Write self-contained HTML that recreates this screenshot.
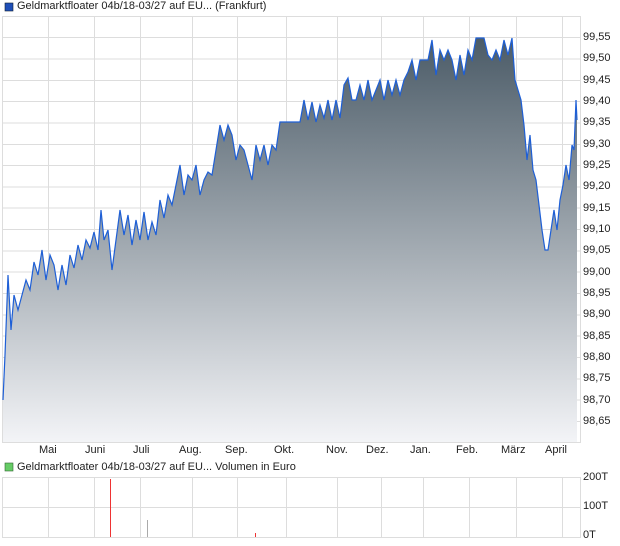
<!DOCTYPE html>
<html><head><meta charset="utf-8"><style>
body{margin:0;width:620px;height:546px;background:#fff;font-family:"Liberation Sans",sans-serif;font-size:11px;color:#222;overflow:hidden;position:relative}
.t{position:absolute;white-space:nowrap}
</style></head><body>
<svg width="620" height="546" style="position:absolute;left:0;top:0">
<defs><linearGradient id="g" gradientUnits="userSpaceOnUse" x1="0" y1="38" x2="0" y2="442">
<stop offset="0" stop-color="#4b5b67"/><stop offset="1" stop-color="#f3f4f7"/></linearGradient>
<path id="p" d="M3 400L5 355L8 275L11 330L14 295L18 310L22 295L26 280L30 290L34 262L38 275L42 250L46 280L50 255L54 265L58 290L62 265L66 285L70 255L74 268L78 245L82 260L86 240L90 248L94 232L98 250L101 210L104 240L108 230L112 270L116 240L120 210L124 235L128 215L132 245L136 220L140 240L144 212L148 240L152 222L156 235L160 200L164 218L168 195L172 205L176 185L180 165L184 195L188 175L192 180L196 165L200 195L204 180L208 172L212 175L216 150L220 125L224 140L228 125L232 135L236 160L240 145L244 150L248 165L252 180L256 145L260 160L264 145L268 165L272 145L276 150L280 122L284 122L288 122L292 122L296 122L300 122L304 100L308 120L312 102L316 122L320 105L324 118L328 100L332 120L336 100L340 118L344 85L348 78L352 100L356 100L360 85L364 100L368 80L372 100L376 90L380 80L384 100L388 80L392 95L396 80L400 95L404 80L408 72L412 60L416 80L420 60L424 60L428 60L432 40L436 75L440 50L444 60L448 50L452 60L456 80L460 55L464 75L468 50L472 60L476 38L480 38L484 38L488 55L492 60L496 50L500 60L504 40L508 55L512 38L515 80L518 90L521 100L524 125L527 160L530 135L533 170L536 180L539 205L542 230L545 250L548 250L551 230L554 210L557 230L560 200L563 185L566 165L569 180L572 145L574 150L576 100L577 120"/>
</defs>
<g stroke="#ddd" stroke-width="1" fill="none">
<rect x="2.5" y="16.5" width="578" height="426"/>
<path d="M48.5 16V442M94.5 16V442M140.5 16V442M192.5 16V442M237.5 16V442M286.5 16V442M337.5 16V442M381.5 16V442M423.5 16V442M469.5 16V442M516.5 16V442M562.5 16V442"/>
<path d="M2 37.5H580M2 59H580M2 80.5H580M2 101.5H580M2 123H580M2 144.5H580M2 165.5H580M2 187H580M2 208H580M2 229.5H580M2 251H580M2 272H580M2 293.5H580M2 315H580M2 336H580M2 357.5H580M2 379H580M2 400H580M2 421.5H580"/>
<rect x="2.5" y="477.5" width="578" height="60"/>
<path d="M2 507.5H580M48.5 477V537M94.5 477V537M140.5 477V537M192.5 477V537M237.5 477V537M286.5 477V537M337.5 477V537M381.5 477V537M423.5 477V537M469.5 477V537M516.5 477V537M562.5 477V537"/>
</g>
<rect x="5" y="3" width="8" height="8" fill="#1f4fb8" stroke="#123" stroke-width="0.6"/>
<rect x="5" y="463" width="8" height="8" fill="#6c6" stroke="#363" stroke-width="0.6"/>
<path d="M3 400L5 355L8 275L11 330L14 295L18 310L22 295L26 280L30 290L34 262L38 275L42 250L46 280L50 255L54 265L58 290L62 265L66 285L70 255L74 268L78 245L82 260L86 240L90 248L94 232L98 250L101 210L104 240L108 230L112 270L116 240L120 210L124 235L128 215L132 245L136 220L140 240L144 212L148 240L152 222L156 235L160 200L164 218L168 195L172 205L176 185L180 165L184 195L188 175L192 180L196 165L200 195L204 180L208 172L212 175L216 150L220 125L224 140L228 125L232 135L236 160L240 145L244 150L248 165L252 180L256 145L260 160L264 145L268 165L272 145L276 150L280 122L284 122L288 122L292 122L296 122L300 122L304 100L308 120L312 102L316 122L320 105L324 118L328 100L332 120L336 100L340 118L344 85L348 78L352 100L356 100L360 85L364 100L368 80L372 100L376 90L380 80L384 100L388 80L392 95L396 80L400 95L404 80L408 72L412 60L416 80L420 60L424 60L428 60L432 40L436 75L440 50L444 60L448 50L452 60L456 80L460 55L464 75L468 50L472 60L476 38L480 38L484 38L488 55L492 60L496 50L500 60L504 40L508 55L512 38L515 80L518 90L521 100L524 125L527 160L530 135L533 170L536 180L539 205L542 230L545 250L548 250L551 230L554 210L557 230L560 200L563 185L566 165L569 180L572 145L574 150L576 100L577 120L577 442L3 442Z" fill="url(#g)"/>
<use href="#p" fill="none" stroke="#1e5fd6" stroke-width="1.2"/>
<rect x="110" y="479" width="1" height="58" fill="#e33"/>
<rect x="147" y="520" width="1" height="17" fill="#aaa"/>
<rect x="255" y="533" width="1" height="4" fill="#e33"/>
</svg>
<div class="t" style="left:17px;top:0px">Geldmarktfloater 04b/18-03/27 auf EU... (Frankfurt)</div>
<div class="t" style="left:17px;top:461px">Geldmarktfloater 04b/18-03/27 auf EU... Volumen in Euro</div>
<div class="t" style="left:583px;top:31px">99,55</div><div class="t" style="left:583px;top:52px">99,50</div><div class="t" style="left:583px;top:74px">99,45</div><div class="t" style="left:583px;top:95px">99,40</div><div class="t" style="left:583px;top:116px">99,35</div><div class="t" style="left:583px;top:138px">99,30</div><div class="t" style="left:583px;top:159px">99,25</div><div class="t" style="left:583px;top:180px">99,20</div><div class="t" style="left:583px;top:202px">99,15</div><div class="t" style="left:583px;top:223px">99,10</div><div class="t" style="left:583px;top:244px">99,05</div><div class="t" style="left:583px;top:266px">99,00</div><div class="t" style="left:583px;top:287px">98,95</div><div class="t" style="left:583px;top:308px">98,90</div><div class="t" style="left:583px;top:330px">98,85</div><div class="t" style="left:583px;top:351px">98,80</div><div class="t" style="left:583px;top:372px">98,75</div><div class="t" style="left:583px;top:394px">98,70</div><div class="t" style="left:583px;top:415px">98,65</div>
<div class="t" style="left:39px;top:444px">Mai</div><div class="t" style="left:85px;top:444px">Juni</div><div class="t" style="left:133px;top:444px">Juli</div><div class="t" style="left:179px;top:444px">Aug.</div><div class="t" style="left:225px;top:444px">Sep.</div><div class="t" style="left:274px;top:444px">Okt.</div><div class="t" style="left:326px;top:444px">Nov.</div><div class="t" style="left:366px;top:444px">Dez.</div><div class="t" style="left:410px;top:444px">Jan.</div><div class="t" style="left:456px;top:444px">Feb.</div><div class="t" style="left:501px;top:444px">März</div><div class="t" style="left:545px;top:444px">April</div>
<div class="t" style="left:583px;top:471px">200T</div><div class="t" style="left:583px;top:500px">100T</div><div class="t" style="left:583px;top:529px">0T</div>
</body></html>
